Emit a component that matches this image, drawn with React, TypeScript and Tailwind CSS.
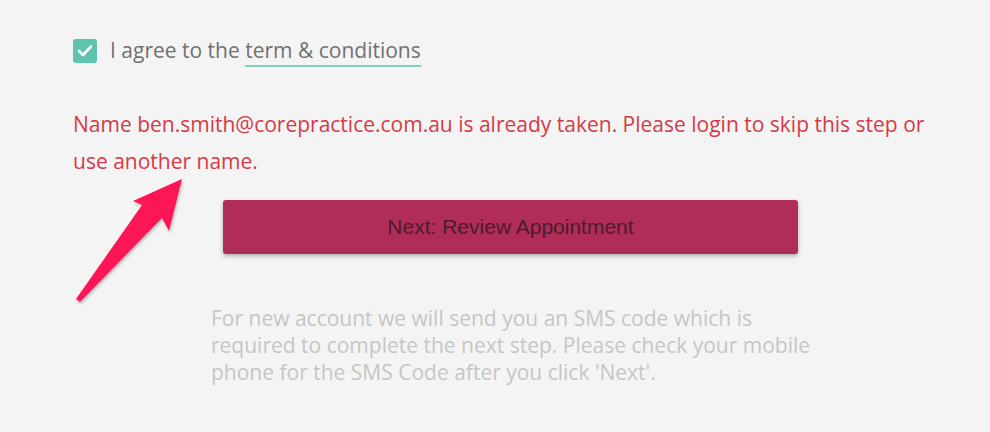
import React from "react";

export default function App() {
  return (
    <div
      className="relative w-[990px] h-[432px] overflow-hidden bg-[#f4f4f4]"
      style={{ fontFamily: '"Open Sans", "Liberation Sans", sans-serif' }}
    >
      <div className="pl-[73px] pt-[35px]">
        {/* Agree row */}
        <label className="flex items-center gap-[13px]">
          <span className="flex h-[24px] w-[24px] items-center justify-center rounded-[3px] bg-[#5ec4ad]">
            <svg width="16" height="13" viewBox="0 0 16 13" fill="none">
              <path d="M2 7l4 4L14 2.5" stroke="white" strokeWidth="2.6" strokeLinecap="round" strokeLinejoin="round" />
            </svg>
          </span>
          <span className="text-[21px] text-[#717171]">
            I agree to the{" "}
            <span className="border-b-2 border-[#7fd0bd] pb-[1px]">term &amp; conditions</span>
          </span>
        </label>

        {/* Error */}
        <p className="mt-[39px] w-[880px] text-[21px] leading-[37px] text-[#d63a46]">
          Name ben.smith@corepractice.com.au is already taken. Please login to skip this step or use another name.
        </p>

        {/* Button */}
        <button
          className="mt-[20px] ml-[150px] flex h-[54px] w-[575px] items-center justify-center rounded-[3px] bg-[#b02d57] text-[21px] text-[#4a1c2d] shadow-[0_2px_4px_rgba(0,0,0,0.3)]"
          style={{ fontFamily: '"Liberation Sans", Arial, sans-serif' }}
        >
          Next: Review Appointment
        </button>

        {/* Helper */}
        <p className="mt-[51px] ml-[138px] w-[615px] text-[21px] leading-[27px] text-[#c6c6c6]">
          For new account we will send you an SMS code which is required to complete the next step. Please check your mobile phone for the SMS Code after you click 'Next'.
        </p>
      </div>

      {/* Annotation arrow */}
      <svg className="absolute left-0 top-0" width="990" height="432" viewBox="0 0 990 432">
        <defs>
          <filter id="sh" x="-20%" y="-20%" width="140%" height="140%">
            <feDropShadow dx="1" dy="2" stdDeviation="1.5" floodColor="#000" floodOpacity="0.25" />
          </filter>
        </defs>
        <polygon
          points="182,179 169,231 162,218 80,302 76,299 142,205 133,201"
          fill="#fd1556"
          filter="url(#sh)"
        />
      </svg>
    </div>
  );
}
